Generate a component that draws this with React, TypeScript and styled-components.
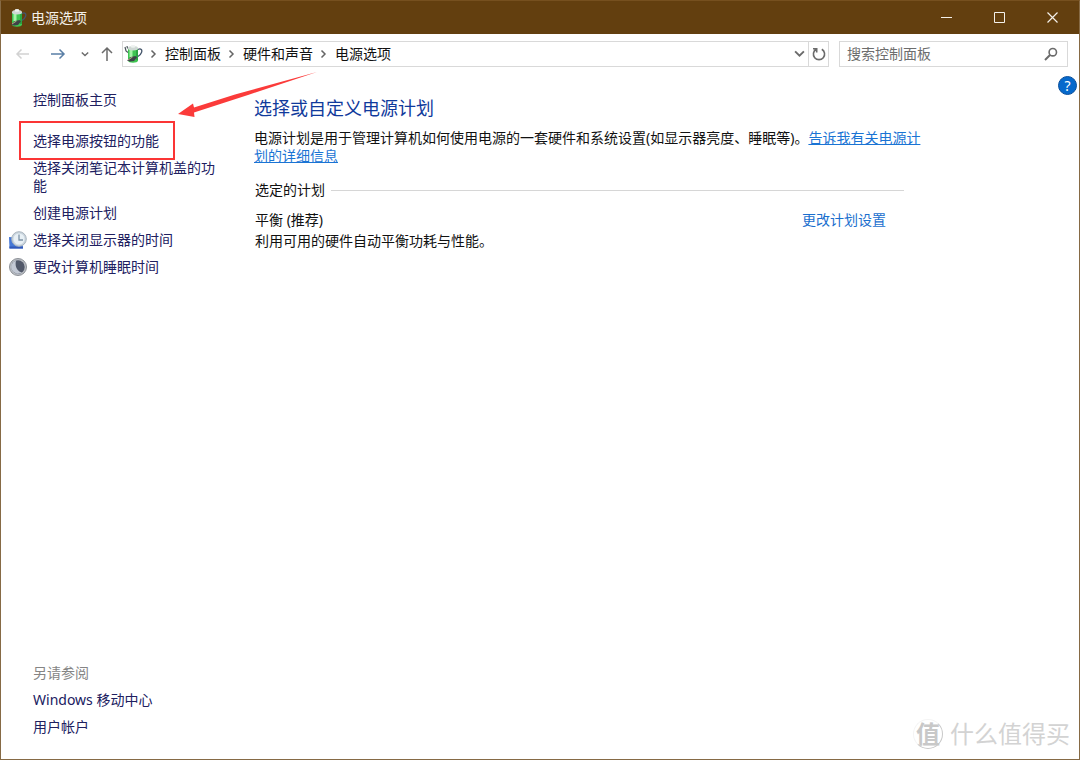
import React from "react";
import styled, { createGlobalStyle } from "styled-components";

const GlobalStyle = createGlobalStyle`
  * { box-sizing: border-box; }
  body {
    margin: 0;
    background: #ffffff;
    color: #111111;
    font: 14px/18px "Noto Sans", "Noto Sans CJK SC", sans-serif;
  }
  button, input { font: inherit; }
`;

const Window = styled.div`
  position: relative;
  display: flex;
  flex-direction: column;
  min-height: 100vh;
  border: 1px solid #866a45;
  border-top-color: #76501f;
`;

const TitleBar = styled.header`
  display: flex;
  align-items: center;
  height: 33px;
  padding-left: 6px;
  gap: 4px;
  background: #633f0f;
  color: #f4f0ea;
`;

const WindowTitle = styled.h1`
  flex: 1;
  margin: 0;
  font-size: 14px;
  font-weight: 400;
`;

const WindowControls = styled.div`
  display: flex;
`;

const WindowButton = styled.button`
  display: flex;
  align-items: center;
  justify-content: center;
  width: 53px;
  height: 33px;
  padding: 0;
  border: 0;
  background: transparent;
  color: #f4f0ea;
`;

const Toolbar = styled.div`
  display: flex;
  align-items: center;
  height: 39px;
  padding: 0 11px 0 4px;
`;

const NavButton = styled.button<{ $width: number; $color?: string }>`
  display: flex;
  flex: none;
  align-items: center;
  justify-content: center;
  width: ${(p) => p.$width}px;
  height: 24px;
  padding: 0;
  border: 0;
  background: transparent;
  color: ${(p) => p.$color ?? "#6b6b6b"};
`;

const AddressBar = styled.div`
  display: flex;
  flex: 1;
  align-items: center;
  height: 26px;
  margin: 0 10px 0 3px;
  border: 1px solid #d9d9d9;
`;

const Breadcrumbs = styled.ol`
  display: flex;
  flex: 1;
  margin: 0;
  padding: 0;
  list-style: none;
`;

const Crumb = styled.li`
  display: flex;
  align-items: center;

  svg { margin: 0 7px 0 6px; color: #666666; }

  a { color: #111111; text-decoration: none; }
`;

const RefreshBox = styled.div`
  height: 24px;
  border-left: 1px solid #d9d9d9;
`;

const SearchBox = styled.form`
  display: flex;
  align-items: center;
  width: 229px;
  height: 26px;
  padding-left: 7px;
  border: 1px solid #d9d9d9;
`;

const SearchInput = styled.input`
  flex: 1;
  min-width: 0;
  padding: 0;
  border: 0;
  outline: 0;
  background: transparent;

  &::placeholder { color: #6d6d6d; opacity: 1; }
`;

const Body = styled.div`
  position: relative;
  display: flex;
  flex: 1;
`;

const Sidebar = styled.aside`
  display: flex;
  flex: none;
  flex-direction: column;
  justify-content: space-between;
  width: 220px;
  padding: 18px 0 23px 6px;
`;

const TaskList = styled.ul`
  display: flex;
  flex-direction: column;
  gap: 9px;
  margin: 0;
  padding: 0;
  list-style: none;
`;

const TaskItem = styled.li<{ $spaced?: boolean }>`
  display: grid;
  grid-template-columns: 20px 184px;
  column-gap: 6px;
  align-items: center;
  margin-bottom: ${(p) => (p.$spaced ? 14 : 0)}px;

  > :last-child { grid-column: 2; }
`;

const TaskIcon = styled.span`
  display: flex;
  height: 18px;
  align-items: center;
`;

const TaskLink = styled.a<{ $marked?: boolean }>`
  position: relative;
  justify-self: start;
  color: #20205f;
  text-decoration: none;

  &::after {
    content: "";
    display: ${(p) => (p.$marked ? "block" : "none")};
    position: absolute;
    inset: -11px -16px -10px -14px;
    border: 2px solid #fb3535;
  }
`;

const SeeAlso = styled.h2`
  margin: 0;
  color: #858585;
  font-size: 14px;
  font-weight: 400;
`;

const Main = styled.main`
  flex: 1;
  min-width: 0;
  padding: 23px 24px 24px 33px;
`;

const Heading = styled.h2`
  margin: 0;
  color: #103a9c;
  font-size: 18px;
  font-weight: 400;
  line-height: 24px;
`;

const Intro = styled.p`
  max-width: 672px;
  margin: 9px 0 16px;
`;

const InlineLink = styled.a`
  color: #1a74d4;
`;

const PlanGroup = styled.fieldset`
  min-width: 0;
  max-width: 650px;
  margin: 0;
  padding: 0 0 0 1px;
  border: 0;
`;

const PlanLegend = styled.legend`
  display: flex;
  align-items: center;
  gap: 6px;
  width: 100%;
  padding: 0;

  &::after {
    content: "";
    flex: 1;
    height: 1px;
    background: #d6d6d6;
  }
`;

const PlanRow = styled.div`
  display: flex;
  justify-content: space-between;
  padding: 12px 18px 0 0;
`;

const PlanName = styled.p`
  margin: 0 0 3px;
`;

const PlanLink = styled.a`
  color: #1a6fce;
  text-decoration: none;
`;

const HelpButton = styled.button`
  position: absolute;
  top: 3px;
  right: 2px;
  width: 19px;
  height: 19px;
  padding: 0;
  border: 1px solid #0a4f9c;
  border-radius: 50%;
  background: #0669cc;
  color: #ffffff;
  font-size: 14px;
  line-height: 17px;
`;

const Pointer = styled.svg`
  position: absolute;
  top: -2px;
  left: 176px;
  pointer-events: none;
`;

const Watermark = styled.div`
  position: absolute;
  right: 9px;
  bottom: 8px;
  display: flex;
  align-items: center;
  gap: 7px;
  color: #d3d3d3;
  font-size: 24px;
  line-height: 34px;
  pointer-events: none;
`;

const Seal = styled.span`
  width: 30px;
  height: 30px;
  border: 1px solid #c8c8c8;
  border-top-color: #f4f4f4;
  border-left-color: #f4f4f4;
  border-radius: 50%;
  color: #c8c8c8;
  font-weight: 700;
  line-height: 28px;
  text-align: center;
`;

const BatteryIcon = ({ size, lead }: { size: number; lead?: boolean }) => (
  <svg width={size} height={size} viewBox="0 0 20 20" fill="none" aria-hidden="true">
    {lead && <path d="M2 3l1 4 2 1.500M4 2l.5 2.500" stroke="#4c565c" strokeWidth="1.200" />}
    <path d="M15 5.500c3-1.500 4.500.5 3.500 3-.7 2-2 3-3.500 4" stroke="#45566b" strokeWidth="1.300" />
    <path d="M5 4v12.500c0 3 10 3 10 0V4z" fill="#3fc552" />
    <path d="M8 6v7" stroke="#a4f5a6" strokeWidth="3" />
    <path d="M14 6v10" stroke="#249a3c" strokeWidth="1.500" />
    <ellipse cx="10" cy="4.200" rx="5" ry="2.200" fill="#cfd8d4" />
    <ellipse cx="10" cy="2.400" rx="2.400" ry="1.400" fill="#eef2f0" />
    <path d="M4 16.500l4-3.500 4.500-1 1.500 1.500-3 3.500-4 .5z" fill="#3d4348" />
    <path d="M5 16l4.500-3" stroke="#b7a884" />
  </svg>
);

const DisplayClockIcon = () => (
  <svg width="20" height="20" viewBox="0 0 20 20" fill="none" aria-hidden="true">
    <path d="M2 7l13 1 1 10.500H2.500z" fill="#4678d6" />
    <path d="M2.300 16.500h13.500l.2 2H2.500z" fill="#3158b8" />
    <circle cx="12" cy="9" r="7.300" fill="#cbd6df" stroke="#aab5be" />
    <circle cx="12" cy="9" r="5.500" fill="#e8f0f5" />
    <path d="M12 4.500V10h4" stroke="#7d93a5" strokeWidth="1.300" />
  </svg>
);

const SleepIcon = () => (
  <svg width="20" height="20" viewBox="0 0 20 20" fill="none" aria-hidden="true">
    <circle cx="11" cy="10" r="8.500" fill="#b9bdc3" stroke="#8d9197" />
    <circle cx="11" cy="10" r="6.700" fill="#515869" />
    <path d="M9 3.600a6.700 6.700 0 1 0 6 11.700C10.500 14.500 7.500 9.500 9 3.600z" fill="#c3c9d4" />
  </svg>
);

const ChevronRight = () => (
  <svg width="9" height="10" viewBox="0 0 9 10" fill="none" stroke="currentColor" strokeWidth="1.500" aria-hidden="true">
    <path d="M2.500 1.500L6 5 2.500 8.500" />
  </svg>
);

const ArrowHorizontal = ({ back }: { back?: boolean }) => (
  <svg width="16" height="12" viewBox="0 0 16 12" fill="none" stroke="currentColor" strokeWidth="1.500" aria-hidden="true">
    <path d={back ? "M14 6H2M6.500 1.500L2 6l4.500 4.500" : "M1 6h13M9.500 1.500L14 6l-4.500 4.500"} />
  </svg>
);

const ChevronDown = ({ size }: { size: number }) => (
  <svg width={size} height={size} viewBox="0 0 10 10" fill="none" stroke="currentColor" strokeWidth="1.700" aria-hidden="true">
    <path d="M1 3l4 4 4-4" />
  </svg>
);

const crumbs = ["控制面板", "硬件和声音", "电源选项"];

const tasks: { text: string; icon?: React.ReactNode; marked?: boolean }[] = [
  { text: "选择电源按钮的功能", marked: true },
  { text: "选择关闭笔记本计算机盖的功能" },
  { text: "创建电源计划" },
  { text: "选择关闭显示器的时间", icon: <DisplayClockIcon /> },
  { text: "更改计算机睡眠时间", icon: <SleepIcon /> },
];

export default function App() {
  return (
    <>
      <GlobalStyle />
      <Window>
        <TitleBar>
          <BatteryIcon size={20} />
          <WindowTitle>电源选项</WindowTitle>
          <WindowControls>
            <WindowButton aria-label="最小化">
              <svg width="12" height="12" stroke="currentColor"><path d="M0 5.500h11" /></svg>
            </WindowButton>
            <WindowButton aria-label="最大化">
              <svg width="12" height="12" fill="none" stroke="currentColor"><path d="M.5.500h10v10H.5z" /></svg>
            </WindowButton>
            <WindowButton aria-label="关闭">
              <svg width="12" height="12" stroke="currentColor" strokeWidth="1.200"><path d="M.5.500l10 10M10.500.500l-10 10" /></svg>
            </WindowButton>
          </WindowControls>
        </TitleBar>

        <Toolbar>
          <NavButton $width={35} $color="#d2d2d2" aria-label="后退"><ArrowHorizontal back /></NavButton>
          <NavButton $width={35} $color="#5a7fa6" aria-label="前进"><ArrowHorizontal /></NavButton>
          <NavButton $width={20} aria-label="最近位置"><ChevronDown size={8} /></NavButton>
          <NavButton $width={24} aria-label="向上">
            <svg width="12" height="16" viewBox="0 0 12 16" fill="none" stroke="currentColor" strokeWidth="1.500">
              <path d="M6 15V2M1 7l5-5 5 5" />
            </svg>
          </NavButton>
          <AddressBar>
            <BatteryIcon size={20} lead />
            <Breadcrumbs>
              {crumbs.map((name) => (
                <Crumb key={name}>
                  <ChevronRight />
                  <a href="#">{name}</a>
                </Crumb>
              ))}
            </Breadcrumbs>
            <NavButton $width={18} aria-label="历史地址"><ChevronDown size={11} /></NavButton>
            <RefreshBox>
              <NavButton $width={19} aria-label="刷新">
                <svg width="14" height="14" viewBox="0 0 14 14" fill="none" stroke="currentColor" strokeWidth="1.600">
                  <path d="M9.800 2.200a5.600 5.600 0 1 1-5.600 0M1 1.800h3.700v3.700" />
                </svg>
              </NavButton>
            </RefreshBox>
          </AddressBar>
          <SearchBox onSubmit={(e) => e.preventDefault()}>
            <SearchInput type="search" aria-label="搜索控制面板" placeholder="搜索控制面板" />
            <NavButton $width={32} aria-label="搜索">
              <svg width="14" height="14" viewBox="0 0 14 14" fill="none" stroke="currentColor" strokeWidth="1.600">
                <circle cx="8.800" cy="5.200" r="3.700" />
                <path d="M6 8l-5 5" strokeWidth="2" />
              </svg>
            </NavButton>
          </SearchBox>
        </Toolbar>

        <Body>
          <Sidebar>
            <TaskList>
              <TaskItem $spaced><TaskLink href="#">控制面板主页</TaskLink></TaskItem>
              {tasks.map(({ text, icon, marked }) => (
                <TaskItem key={text}>
                  {icon && <TaskIcon>{icon}</TaskIcon>}
                  <TaskLink href="#" $marked={marked}>{text}</TaskLink>
                </TaskItem>
              ))}
            </TaskList>
            <TaskList>
              <TaskItem><SeeAlso>另请参阅</SeeAlso></TaskItem>
              <TaskItem><TaskLink href="#">Windows 移动中心</TaskLink></TaskItem>
              <TaskItem><TaskLink href="#">用户帐户</TaskLink></TaskItem>
            </TaskList>
          </Sidebar>

          <Main>
            <Heading>选择或自定义电源计划</Heading>
            <Intro>
              电源计划是用于管理计算机如何使用电源的一套硬件和系统设置(如显示器亮度、睡眠等)。
              <InlineLink href="#">告诉我有关电源计划的详细信息</InlineLink>
            </Intro>
            <PlanGroup>
              <PlanLegend>选定的计划</PlanLegend>
              <PlanRow>
                <div>
                  <PlanName>平衡 (推荐)</PlanName>
                  <PlanName>利用可用的硬件自动平衡功耗与性能。</PlanName>
                </div>
                <PlanLink href="#">更改计划设置</PlanLink>
              </PlanRow>
            </PlanGroup>
          </Main>

          <HelpButton aria-label="帮助">?</HelpButton>
          <Pointer width="142" height="48" viewBox="0 0 142 48" aria-hidden="true">
            <path d="M1 43L16 32.500l1 4L58 23.500 140 1 71 24 17 41.500l.5 4.500z" fill="#fb3b3a" />
          </Pointer>
        </Body>

        <Watermark>
          <Seal>值</Seal>
          <span>什么值得买</span>
        </Watermark>
      </Window>
    </>
  );
}
